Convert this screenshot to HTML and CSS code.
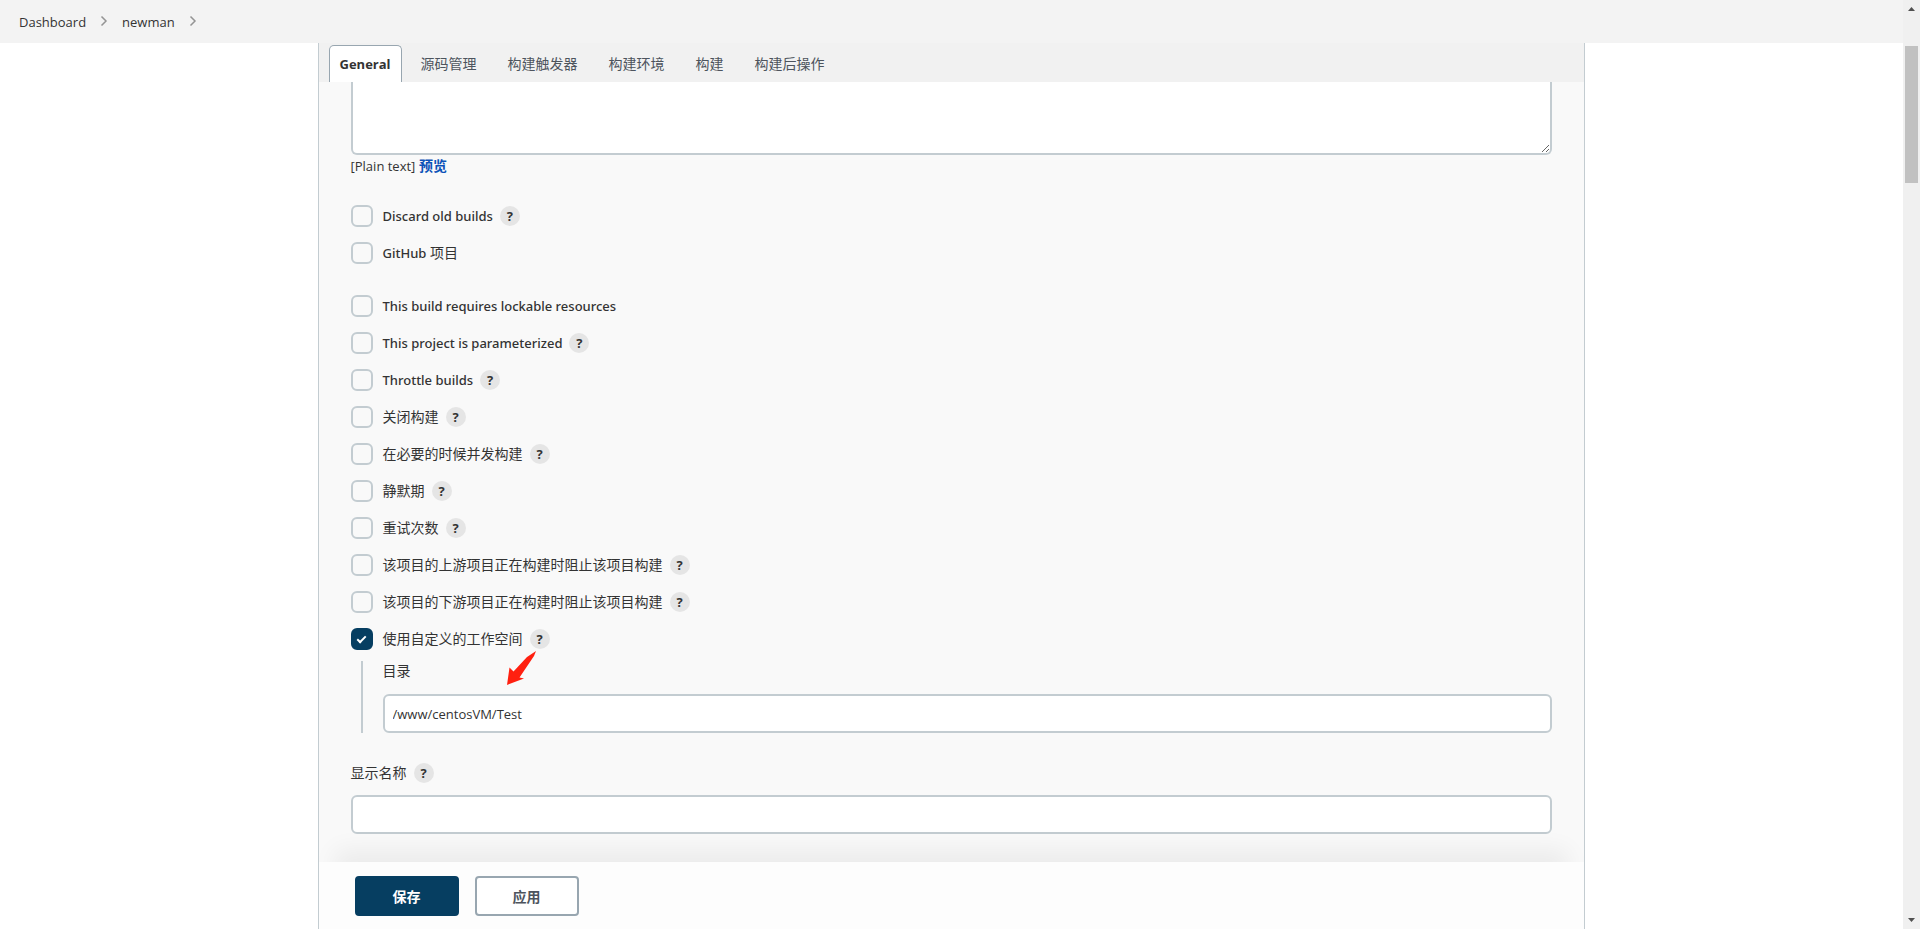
FILE: index.html
```
<!DOCTYPE html>
<html lang="zh-CN">
<head>
    <meta charset="UTF-8">
    <meta name="viewport" content="width=device-width, initial-scale=1.0">
    <title>newman Config [Jenkins]</title>
    <link rel="stylesheet" href="styles.css">
</head>
<body>
    <div class="page">
        <nav class="breadcrumb">
            <a href="#">Dashboard</a>
            <svg class="chevron" viewBox="0 0 8 12"><path d="M1.500 1.500L6 6l-4.500 4.500"/></svg>
            <a href="#">newman</a>
            <svg class="chevron" viewBox="0 0 8 12"><path d="M1.500 1.500L6 6l-4.500 4.500"/></svg>
        </nav>

        <form class="panel">
            <div class="tab-bar">
                <a class="tab active" href="#">General</a>
                <a class="tab" href="#">源码管理</a>
                <a class="tab" href="#">构建触发器</a>
                <a class="tab" href="#">构建环境</a>
                <a class="tab" href="#">构建</a>
                <a class="tab" href="#">构建后操作</a>
            </div>

            <div class="config">
                <textarea class="description" aria-label="描述"></textarea>
                <div class="markup"><span class="latin">[Plain text]</span> <a href="#">预览</a></div>

                <div class="options">
                    <div class="option">
                        <input type="checkbox" id="discard"><label class="latin" for="discard">Discard old builds</label>
                        <button type="button" class="help">?</button>
                    </div>
                    <div class="option">
                        <input type="checkbox" id="github"><label for="github"><span class="latin">GitHub</span> 项目</label>
                    </div>
                </div>

                <div class="options">
                    <div class="option">
                        <input type="checkbox" id="lockable"><label class="latin" for="lockable">This build requires lockable resources</label>
                    </div>
                    <div class="option">
                        <input type="checkbox" id="params"><label class="latin" for="params">This project is parameterized</label>
                        <button type="button" class="help">?</button>
                    </div>
                    <div class="option">
                        <input type="checkbox" id="throttle"><label class="latin" for="throttle">Throttle builds</label>
                        <button type="button" class="help">?</button>
                    </div>
                    <div class="option">
                        <input type="checkbox" id="disable"><label for="disable">关闭构建</label>
                        <button type="button" class="help">?</button>
                    </div>
                    <div class="option">
                        <input type="checkbox" id="concurrent"><label for="concurrent">在必要的时候并发构建</label>
                        <button type="button" class="help">?</button>
                    </div>
                    <div class="option">
                        <input type="checkbox" id="quiet"><label for="quiet">静默期</label>
                        <button type="button" class="help">?</button>
                    </div>
                    <div class="option">
                        <input type="checkbox" id="retry"><label for="retry">重试次数</label>
                        <button type="button" class="help">?</button>
                    </div>
                    <div class="option">
                        <input type="checkbox" id="upstream"><label for="upstream">该项目的上游项目正在构建时阻止该项目构建</label>
                        <button type="button" class="help">?</button>
                    </div>
                    <div class="option">
                        <input type="checkbox" id="downstream"><label for="downstream">该项目的下游项目正在构建时阻止该项目构建</label>
                        <button type="button" class="help">?</button>
                    </div>
                    <div class="option">
                        <input type="checkbox" id="workspace" checked><label for="workspace">使用自定义的工作空间</label>
                        <button type="button" class="help">?</button>
                    </div>
                </div>

                <div class="nested">
                    <label for="directory">目录</label>
                    <input class="text-input" type="text" id="directory" value="/www/centosVM/Test">
                    <svg class="arrow" viewBox="0 0 30 34"><path d="M29 0L20 6 6.500 20.500 2.500 16.500 0 34l17-6.500-4.500-1L27 5z"/></svg>
                </div>

                <div class="field">
                    <div class="field-label">
                        <label for="display-name">显示名称</label>
                        <button type="button" class="help">?</button>
                    </div>
                    <input class="text-input" type="text" id="display-name">
                </div>
            </div>

            <div class="bottom-bar">
                <button type="button" class="btn primary">保存</button>
                <button type="button" class="btn">应用</button>
            </div>
        </form>
    </div>

    <div class="scrollbar">
        <svg class="scroll-arrow" viewBox="0 0 7 4"><path d="M0 4L3.500 0 7 4z"/></svg>
        <div class="scroll-track"><div class="scroll-thumb"></div></div>
        <svg class="scroll-arrow" viewBox="0 0 7 4"><path d="M0 0l3.500 4L7 0z"/></svg>
    </div>
</body>
</html>
```
FILE: styles.css
```
* {
    box-sizing: border-box;
}

body {
    display: flex;
    height: 100vh;
    margin: 0;
    overflow: hidden;
    background: #fff;
    color: #333;
    font-family: 'Open Sans', 'Noto Sans CJK SC', sans-serif;
    font-size: 14px;
    line-height: 20px;
}

a {
    color: inherit;
    text-decoration: none;
}

.latin {
    font-size: 13px;
}

.page {
    flex: 1;
    display: flex;
    flex-direction: column;
}

.breadcrumb {
    display: flex;
    align-items: center;
    gap: 14px;
    height: 43px;
    padding: 0 19px;
    background: #f3f3f3;
    font-size: 13px;
}

.chevron {
    width: 8px;
    height: 12px;
    margin-bottom: 2px;
    fill: none;
    stroke: #949494;
    stroke-width: 1.5;
}

.panel {
    flex: 1;
    display: flex;
    flex-direction: column;
    width: 66.63%;
    min-height: 0;
    margin: 0 auto;
    overflow: hidden;
    border: solid #c3ccd1;
    border-width: 0 1px;
    background: #f9f9f9;
}

.tab-bar {
    display: flex;
    gap: 7px;
    padding: 2px 10px 0;
    background: #f1f1f1;
    color: #4d545d;
}

.tab {
    height: 37px;
    padding: 8px 11px;
    border: 1px solid transparent;
    border-bottom: 0;
    border-radius: 5px 5px 0 0;
}

.tab.active {
    padding: 8px 10px;
    background: #fff;
    border-color: #98a6b0;
    color: #333;
    font-size: 13px;
    font-weight: 700;
}

.config {
    flex: 1;
    min-height: 0;
    padding: 0 32px;
}

.description {
    display: block;
    width: 100%;
    height: 73px;
    border: 2px solid #c3ccd1;
    border-top: 0;
    border-radius: 0 0 6px 6px;
    background: #fff;
    outline: none;
    resize: vertical;
}

.markup {
    margin: 1px 0 29px;
}

.markup a {
    color: #0b52b8;
    font-weight: 700;
}

.options {
    display: flex;
    flex-direction: column;
    gap: 15px;
    margin-bottom: 31px;
}

.option {
    display: flex;
    align-items: center;
    height: 22px;
}

.option .latin {
    font-family: 'Noto Sans', 'Open Sans', sans-serif;
    font-weight: 500;
}

.option input {
    appearance: none;
    width: 22px;
    height: 22px;
    margin: 0 10px 0 0;
    border: 2px solid #c3ccd1;
    border-radius: 6px;
}

.option input:checked {
    display: grid;
    place-items: center;
    border-color: #063e61;
    background: #063e61;
}

.option input:checked::after {
    content: '';
    width: 3px;
    height: 7px;
    margin-bottom: 2px;
    border: solid #fff;
    border-width: 0 2px 2px 0;
    transform: rotate(45deg);
}

.help {
    width: 20px;
    height: 20px;
    margin-left: 7px;
    padding: 0;
    border: 0;
    border-radius: 50%;
    background: #e5e5e5;
    color: #333;
    font: 700 13px/20px 'Open Sans', sans-serif;
}

.nested {
    position: relative;
    margin: -20px 0 30px 10px;
    padding-left: 20px;
    border-left: 2px solid #c3ccd1;
}

.nested label {
    display: block;
    margin-bottom: 13px;
}

.text-input {
    display: block;
    width: 100%;
    height: 39px;
    padding: 0 8px;
    border: 2px solid #c3ccd1;
    border-radius: 6px;
    background: #fff;
    color: #333;
    font: 13px 'Open Sans', sans-serif;
    outline: none;
}

.arrow {
    position: absolute;
    top: -10px;
    left: 144px;
    width: 30px;
    height: 34px;
    fill: #ff2010;
}

.field-label {
    display: flex;
    align-items: center;
    margin-bottom: 12px;
}

.bottom-bar {
    display: flex;
    gap: 16px;
    padding: 14px 36px 13px;
    background: #fdfdfd;
    box-shadow: 0 -28px 24px -16px rgba(0, 0, 0, 0.06);
}

.btn {
    width: 104px;
    height: 40px;
    border: 2px solid #98a6b0;
    border-radius: 4px;
    background: #fff;
    color: #4d545d;
    font: 700 14px 'Open Sans', 'Noto Sans CJK SC', sans-serif;
}

.btn.primary {
    border-color: #063e61;
    background: #063e61;
    color: #fff;
}

.scrollbar {
    display: flex;
    flex-direction: column;
    align-items: center;
    width: 17px;
    padding: 7px 0;
    background: #f0f0f0;
}

.scroll-arrow {
    width: 7px;
    height: 4px;
    fill: #505050;
}

.scroll-track {
    flex: 1;
    padding: 35px 0;
}

.scroll-thumb {
    width: 13px;
    height: 137px;
    background: #c1c1c1;
}
```
